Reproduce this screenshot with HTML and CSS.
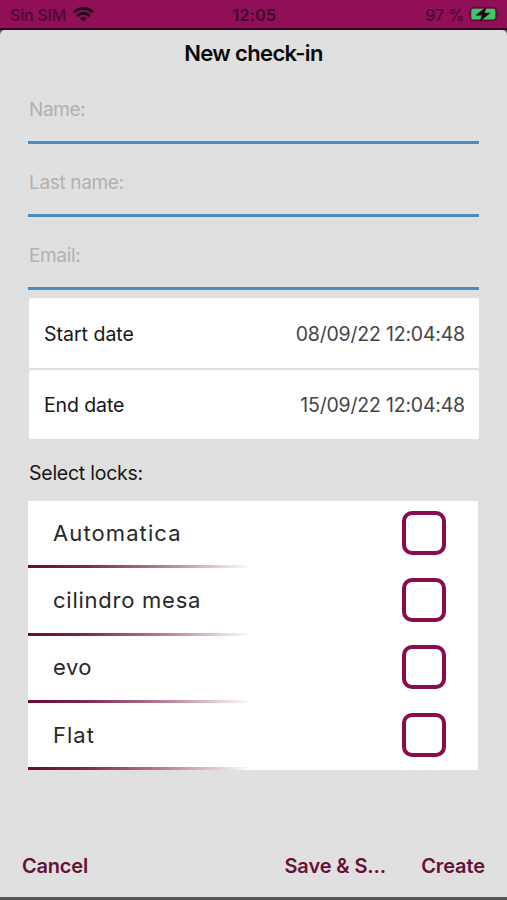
FILE: index.html
```html
<!DOCTYPE html>
<html lang="en">
<head>
<meta charset="utf-8">
<title>New check-in</title>
<link rel="stylesheet" href="styles.css">
</head>
<body>
<header class="status">
  <div class="carrier"><span>Sin SIM</span>
    <svg class="wifi" width="21" height="15" viewBox="0 0 21 15" fill="none" stroke="#23051a"><path d="M1 5.2Q10.500-2.800 20 5.200" stroke-width="2.900"/><path d="M4.300 8.900Q10.500 3.600 16.700 8.900" stroke-width="2.700"/><path d="M10.500 14.700 7.100 11.400Q10.500 8.700 13.900 11.400Z" fill="#23051a" stroke="none"/></svg>
  </div>
  <div class="clock">12:05</div>
  <div class="power"><span>97 %</span>
    <svg width="32" height="17" viewBox="0 0 32 17"><rect x=".8" y="1.200" width="26.900" height="13.500" rx="4" fill="#6f0a48" stroke="#5d0a3c"/><rect x="2.300" y="2.700" width="24" height="10.700" rx="2" fill="#3dc864"/><path d="M29.500 6.300q1.700 1.700 0 3.500z" fill="#5d0a3c"/><path d="M17 1.500 7.500 9h5.800l-2 6L20.500 7.300h-5.500z" fill="#16040f" stroke="#26101f" stroke-width="1"/></svg>
  </div>
</header>
<main class="dialog">
  <h1>New check-in</h1>
  <div class="fields">
    <div class="field"><span>Name:</span></div>
    <div class="field"><span>Last name:</span></div>
    <div class="field"><span>Email:</span></div>
  </div>
  <div class="dates">
    <div class="date"><span>Start date</span><time>08/09/22 12:04:48</time></div>
    <div class="date"><span class="d-end">End date</span><time>15/09/22 12:04:48</time></div>
  </div>
  <h2>Select locks:</h2>
  <ul class="locks">
    <li><span class="l1">Automatica</span><i class="box"></i></li>
    <li><span class="l2">cilindro mesa</span><i class="box"></i></li>
    <li><span class="l3">evo</span><i class="box"></i></li>
    <li><span class="l4">Flat</span><i class="box"></i></li>
  </ul>
  <footer class="actions"><span class="cancel">Cancel</span><span class="save">Save &amp; S...</span><span class="create">Create</span></footer>
</main>
</body>
</html>
```
FILE: styles.css
```css
* { box-sizing: border-box; }
body { margin: 0; width: 507px; height: 900px; overflow: hidden; background: #555; font-family: Inter, "Liberation Sans", sans-serif; color: #161616; white-space: nowrap; }
.status { height: 30px; background: #900f57; border-bottom: 2px solid #35031f; display: grid; grid-template-columns: 1fr auto 1fr; align-items: center; padding: 1px 6px 0 10px; color: #4d0831; font-size: 16px; font-weight: 500; }
.carrier, .power { display: flex; align-items: center; }
.carrier { gap: 7px; letter-spacing: -.2px; }
.power { justify-content: flex-end; gap: 5px; letter-spacing: -.1px; }
.clock { color: #3c0626; font-weight: 600; letter-spacing: .3px; margin-left: -2px; }
.dialog { height: 867px; background: #e0e0e0; border-radius: 5px 5px 0 0; padding: 0 28px; display: flex; flex-direction: column; }
h1 { margin: 0; height: 46px; line-height: 46px; text-align: center; font-size: 22px; font-weight: 600; color: #090909; letter-spacing: -.65px; }
.field { width: 451px; height: 73px; border-bottom: 3px solid #4b8bbf; padding: 27px 1px 0; color: #b1b1b1; font-size: 19px; line-height: 24px; letter-spacing: -.35px; }
.fields { height: 214px; margin-top: -5px; }
.dates { margin-top: 13px; display: flex; flex-direction: column; gap: 2px; }
.date { width: 450px; margin-left: 1px; height: 69.500px; background: #fff; border-radius: 2px; display: flex; justify-content: space-between; align-items: center; padding: 2px 14px 0 15px; font-size: 19.500px; }
.d-end { letter-spacing: -.1px; }
.date time { color: #454545; letter-spacing: -.2px; }
h2 { margin: 22px 0 0 1px; font-size: 19.500px; font-weight: 400; line-height: 24px; letter-spacing: -.25px; }
.locks { list-style: none; margin: 16px 0 0; padding: 0; background: #fff; width: 450px; height: 269px; }
.locks li { height: 67.300px; display: flex; justify-content: space-between; align-items: center; padding: 0 32px 4px 25px; font-size: 22px; color: #282828; background: linear-gradient(90deg, #690b38, #79284d 25%, #b77c98 60%, #fff) left bottom / 224px 3px no-repeat; }
.l1 { letter-spacing: 1.1px; }
.l2 { letter-spacing: .75px; }
.l3 { letter-spacing: .5px; }
.l4 { letter-spacing: 1px; }
.box { width: 44px; height: 44px; border: 4px solid #870c50; border-radius: 10px; }
.actions { margin-top: auto; height: 63px; display: flex; align-items: center; margin-left: -6px; margin-right: -6px; font-size: 20px; font-weight: 600; color: #681039; }
.cancel { letter-spacing: -.2px; }
.save { margin-left: auto; margin-right: 35px; letter-spacing: -.1px; }
.create { letter-spacing: -.1px; }
```
